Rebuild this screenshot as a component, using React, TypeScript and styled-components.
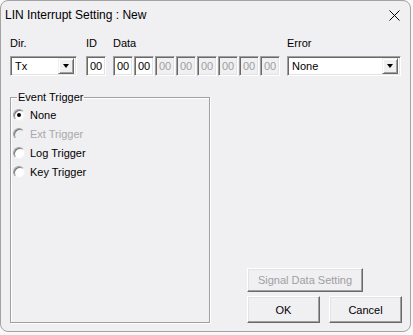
import React from 'react';
import styled, { createGlobalStyle } from 'styled-components';

const GlobalStyle = createGlobalStyle`
  html, body {
    margin: 0;
    padding: 0;
    background: #f8f8f8;
  }
  body {
    font-family: "Liberation Sans", Arial, sans-serif;
    font-size: 11px;
    color: #000;
  }
`;

const Window = styled.div`
  width: 411px;
  height: 332px;
  box-sizing: border-box;
  border: 1px solid #a3a3a3;
  border-radius: 8px;
  background: #f0eff2;
  display: flex;
  flex-direction: column;
  overflow: hidden;
`;

const TitleBar = styled.div`
  height: 28px;
  display: flex;
  align-items: center;
  justify-content: space-between;
  padding: 0 9px 0 4px;
`;

const Title = styled.span`
  font-size: 12px;
  color: #000;
`;

const CloseButton = styled.button`
  width: 14px;
  height: 14px;
  padding: 0;
  border: none;
  background: transparent;
  display: flex;
  align-items: center;
  justify-content: center;
`;

const Content = styled.div`
  flex: 1;
  display: flex;
  flex-direction: column;
  padding: 7px 8px 0 9px;
`;

const FieldRow = styled.div`
  display: flex;
  align-items: flex-start;
`;

const Field = styled.div<{ $ml?: number }>`
  display: flex;
  flex-direction: column;
  gap: 6px;
  margin-left: ${({ $ml }) => $ml ?? 0}px;
`;

const Label = styled.label`
  line-height: 14px;
  height: 14px;
`;

const sunken = `
  box-sizing: border-box;
  border: 1px solid;
  border-color: #a0a0a0 #ffffff #ffffff #a0a0a0;
  box-shadow: inset 1px 1px 0 #696969, inset -1px -1px 0 #e3e3e3;
`;

const Select = styled.div<{ $w: number }>`
  ${sunken}
  width: ${({ $w }) => $w}px;
  height: 20px;
  background: #fff;
  display: flex;
  align-items: center;
  justify-content: space-between;
  padding: 2px 2px 2px 4px;
`;

const DropButton = styled.span`
  box-sizing: border-box;
  width: 16px;
  height: 16px;
  background: #f0f0f0;
  border: 1px solid;
  border-color: #f0f0f0 #696969 #696969 #f0f0f0;
  box-shadow: inset 1px 1px 0 #fff, inset -1px -1px 0 #a0a0a0;
  display: flex;
  align-items: center;
  justify-content: center;
`;

const Arrow = styled.span`
  width: 0;
  height: 0;
  border-left: 3.5px solid transparent;
  border-right: 3.5px solid transparent;
  border-top: 4px solid #000;
`;

const HexBox = styled.div<{ $disabled?: boolean }>`
  ${sunken}
  width: 20px;
  height: 20px;
  padding: 3px 0 0 3px;
  line-height: 13px;
  background: ${({ $disabled }) => ($disabled ? '#f0eff2' : '#fff')};
  color: ${({ $disabled }) => ($disabled ? '#a0a0a0' : '#000')};
`;

const HexGroup = styled.div`
  display: flex;
  gap: 1px;
`;

const Middle = styled.div`
  flex: 1;
  display: flex;
  margin-top: 15px;
  margin-bottom: 8px;
`;

const GroupBox = styled.fieldset`
  width: 200px;
  box-sizing: border-box;
  margin: 0;
  padding: 1px 2px 0 2px;
  border: 1px solid #a0a0a0;
  box-shadow: inset 1px 1px 0 #fff, 1px 1px 0 #fff;
  display: flex;
  flex-direction: column;
`;

const Legend = styled.legend`
  padding: 0 1px;
  margin-left: 4px;
  line-height: 13px;
`;

const RadioRow = styled.div<{ $disabled?: boolean }>`
  height: 19px;
  display: flex;
  align-items: center;
  gap: 5px;
  color: ${({ $disabled }) => ($disabled ? '#a8a8a8' : '#000')};
`;

const RadioCircle = styled.span<{ $checked?: boolean; $disabled?: boolean }>`
  box-sizing: border-box;
  width: 12px;
  height: 12px;
  border-radius: 50%;
  border: 1px solid;
  border-color: #a0a0a0 #f4f4f4 #f4f4f4 #a0a0a0;
  box-shadow: inset 1px 1px 0 #777;
  background: ${({ $disabled }) => ($disabled ? '#f0eff2' : '#fff')};
  display: flex;
  align-items: center;
  justify-content: center;
  &::after {
    content: '';
    width: 4px;
    height: 4px;
    border-radius: 50%;
    background: #000;
    display: ${({ $checked }) => ($checked ? 'block' : 'none')};
  }
`;

const ButtonColumn = styled.div`
  flex: 1;
  display: flex;
  flex-direction: column;
  align-items: flex-start;
  justify-content: flex-end;
  gap: 4px;
  padding-left: 37px;
`;

const ButtonRow = styled.div`
  display: flex;
  gap: 9px;
`;

const Button = styled.button<{ $w: number; $h: number; $disabled?: boolean }>`
  width: ${({ $w }) => $w}px;
  height: ${({ $h }) => $h}px;
  box-sizing: border-box;
  padding: 0;
  font-family: inherit;
  font-size: 11px;
  background: #f0eff2;
  color: ${({ $disabled }) => ($disabled ? '#a0a0a0' : '#000')};
  border: 1px solid;
  border-color: #fff #696969 #696969 #fff;
  box-shadow: inset -1px -1px 0 #a0a0a0, inset 1px 1px 0 #e3e3e3;
`;

const App: React.FC = () => {
  const data = ['00', '00', '00', '00', '00', '00', '00', '00'];
  const triggers = [
    { label: 'None', checked: true },
    { label: 'Ext Trigger', disabled: true },
    { label: 'Log Trigger' },
    { label: 'Key Trigger' },
  ];

  return (
    <>
      <GlobalStyle />
      <Window>
        <TitleBar>
          <Title>LIN Interrupt Setting : New</Title>
          <CloseButton>
            <svg width="11" height="11" viewBox="0 0 11 11">
              <path d="M0.5 0.5 L10.5 10.5 M10.5 0.5 L0.5 10.5" stroke="#000" strokeWidth="1" />
            </svg>
          </CloseButton>
        </TitleBar>
        <Content>
          <FieldRow>
            <Field>
              <Label>Dir.</Label>
              <Select $w={67}>
                <span>Tx</span>
                <DropButton><Arrow /></DropButton>
              </Select>
            </Field>
            <Field $ml={9}>
              <Label>ID</Label>
              <HexBox>00</HexBox>
            </Field>
            <Field $ml={7}>
              <Label>Data</Label>
              <HexGroup>
                {data.map((v, i) => (
                  <HexBox key={i} $disabled={i > 1}>{v}</HexBox>
                ))}
              </HexGroup>
            </Field>
            <Field $ml={7}>
              <Label>Error</Label>
              <Select $w={114}>
                <span>None</span>
                <DropButton><Arrow /></DropButton>
              </Select>
            </Field>
          </FieldRow>
          <Middle>
            <GroupBox>
              <Legend>Event Trigger</Legend>
              {triggers.map((t) => (
                <RadioRow key={t.label} $disabled={t.disabled}>
                  <RadioCircle $checked={t.checked} $disabled={t.disabled} />
                  <span>{t.label}</span>
                </RadioRow>
              ))}
            </GroupBox>
            <ButtonColumn>
              <Button $w={116} $h={24} $disabled>Signal Data Setting</Button>
              <ButtonRow>
                <Button $w={73} $h={27}>OK</Button>
                <Button $w={73} $h={27}>Cancel</Button>
              </ButtonRow>
            </ButtonColumn>
          </Middle>
        </Content>
      </Window>
    </>
  );
};

export default App;
